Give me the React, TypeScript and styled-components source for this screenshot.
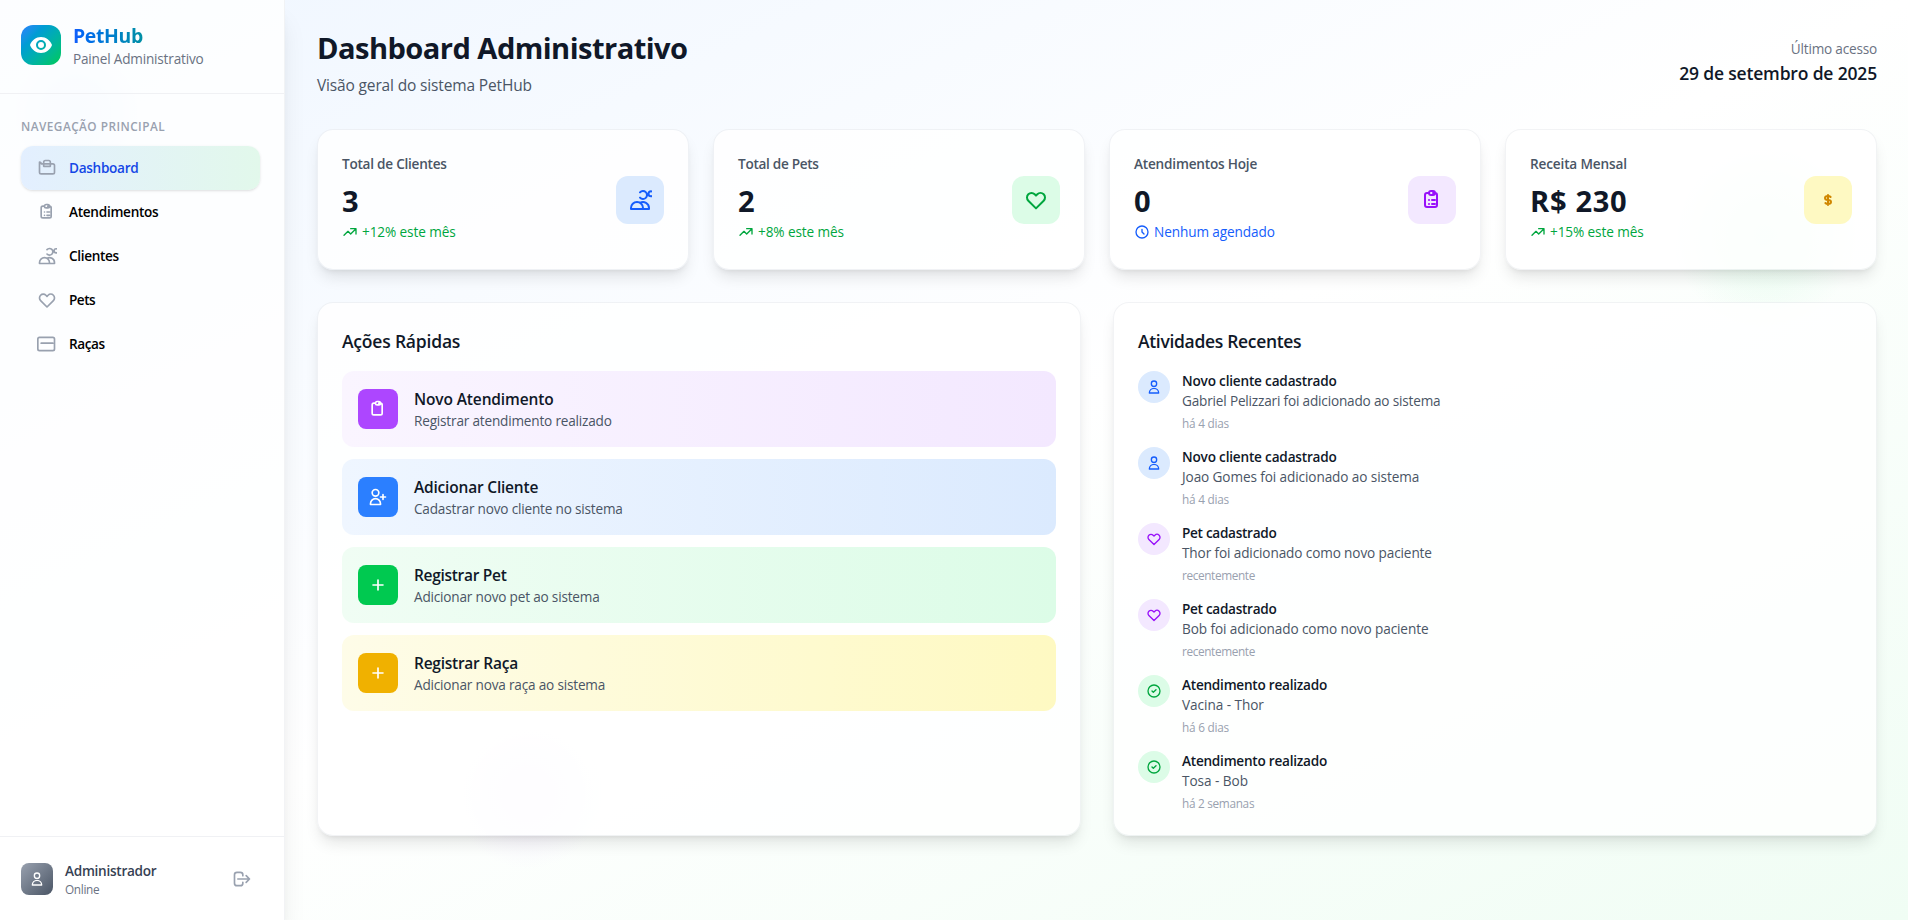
import React from 'react';
import styled, { createGlobalStyle } from 'styled-components';

const Global = createGlobalStyle`
  *, *::before, *::after { box-sizing: border-box; }
  body { margin: 0; overflow: hidden; font-family: "Open Sans", "Noto Sans", sans-serif; color: #101828; }
  p, h1, h2, h3 { margin: 0; }
`;

const paths = {
  dashboard: 'M3 7v10a2 2 0 002 2h14a2 2 0 002-2V9a2 2 0 00-2-2H5a2 2 0 00-2-2zM8 5a2 2 0 012-2h4a2 2 0 012 2v5H8V5z',
  list: 'M9 5H7a2 2 0 00-2 2v10a2 2 0 002 2h8a2 2 0 002-2V7a2 2 0 00-2-2h-2M9 5a2 2 0 002 2h2a2 2 0 002-2M9 5a2 2 0 012-2h2a2 2 0 012 2m-3 7h3m-3 4h3m-6-4h.01M9 16h.01',
  clipboard: 'M9 5H7a2 2 0 00-2 2v10a2 2 0 002 2h8a2 2 0 002-2V7a2 2 0 00-2-2h-2M9 5a2 2 0 002 2h2a2 2 0 002-2M9 5a2 2 0 012-2h2a2 2 0 012 2',
  clients: 'M12 4.354a4 4 0 110 5.292M15 21H3v-1a6 6 0 0112 0v1zm0 0h6v-1a6 6 0 00-9-5.197m13.5-9a2.5 2.5 0 11-5 0 2.5 2.5 0 015 0z',
  heart: 'M4.318 6.318a4.5 4.5 0 000 6.364L12 20.364l7.682-7.682a4.5 4.5 0 00-6.364-6.364L12 7.636l-1.318-1.318a4.5 4.5 0 00-6.364 0z',
  breeds: 'M19 11H5M3 4h16a2 2 0 012 2v12a2 2 0 01-2 2H3a2 2 0 01-2-2V6a2 2 0 012-2z',
  dollar: 'M12 8c-1.657 0-3 .895-3 2s1.343 2 3 2 3 .895 3 2-1.343 2-3 2m0-8c1.11 0 2.08.402 2.599 1M12 8V7m0 1v8m0 0v1m0-1c-1.11 0-2.08-.402-2.599-1',
  trend: 'M13 7h8m0 0v8m0-8l-8 8-4-4-6 6',
  clock: 'M12 8v4l3 3m6-3a9 9 0 11-18 0 9 9 0 0118 0z',
  user: 'M16 7a4 4 0 11-8 0 4 4 0 018 0zM12 14a7 7 0 00-7 7h14a7 7 0 00-7-7z',
  userPlus: 'M18 9v3m0 0v3m0-3h3m-3 0h-3m-2-5a4 4 0 11-8 0 4 4 0 018 0zM3 20a6 6 0 0112 0v1H3v-1z',
  plus: 'M12 6v6m0 0v6m0-6h6m-6 0H6',
  check: 'M9 12l2 2 4-4m6 2a9 9 0 11-18 0 9 9 0 0118 0z',
  logout: 'M17 16l4-4m0 0l-4-4m4 4H7m6 4v1a3 3 0 01-3 3H6a3 3 0 01-3-3V7a3 3 0 013-3h4a3 3 0 013 3v1',
};
type IconName = keyof typeof paths;

const Svg = styled.svg`display: block; flex: none;`;
function Icon({ name, size }: { name: IconName; size: number }) {
  return (
    <Svg width={size} height={size} viewBox="0 0 24 24" fill="none" stroke="currentColor" strokeWidth="2" strokeLinecap="round" strokeLinejoin="round">
      <path d={paths[name]} />
    </Svg>
  );
}

const Page = styled.div`
  display: flex;
  height: 920px;
  background:
    radial-gradient(circle 92px at 1765px 236px, rgba(123, 241, 168, .13) 0%, rgba(123, 241, 168, .08) 55%, rgba(123, 241, 168, 0) 100%),
    radial-gradient(circle 75px at 528px 794px, rgba(218, 178, 255, .15) 0%, rgba(218, 178, 255, .1) 50%, rgba(218, 178, 255, 0) 100%),
    radial-gradient(circle 62px at 76px 112px, rgba(142, 197, 255, .17) 0%, rgba(142, 197, 255, .12) 50%, rgba(142, 197, 255, 0) 100%),
    linear-gradient(to bottom right, #eff6ff, #fff 50%, #f0fdf4);
`;

const Sidebar = styled.aside`
  width: 285px;
  flex: none;
  display: flex;
  flex-direction: column;
  background: rgba(255, 255, 255, .8);
  border-right: 1px solid rgba(229, 231, 235, .5);
  box-shadow: 0 20px 25px -5px rgba(0, 0, 0, .1), 0 8px 10px -6px rgba(0, 0, 0, .1);
`;
const Brand = styled.header`
  display: flex;
  align-items: center;
  gap: 12px;
  padding: 21px 24px 24px 21px;
  border-bottom: 1px solid #f0f1f4;
`;
const Logo = styled.div`
  width: 40px;
  height: 40px;
  display: grid;
  place-items: center;
  border-radius: 12px;
  background: linear-gradient(to bottom right in oklab, #2b7fff, #00c950);
`;
const BrandName = styled.h1`
  font-size: 19.4px;
  line-height: 28px;
  font-weight: 700;
  letter-spacing: -.32px;
  padding-top: 1px;
  margin-bottom: -1px;
  background: linear-gradient(to right in oklab, #155dfc, #00a63e);
  -webkit-background-clip: text;
  background-clip: text;
  color: transparent;
`;
const Body = styled.p<{ $ls?: number; $color?: string }>`
  font-size: 13.6px;
  line-height: 20px;
  letter-spacing: ${p => p.$ls ?? -0.19}px;
  color: ${p => p.$color ?? '#4a5565'};
`;
const Strong = styled(Body)`font-weight: 550;`;
const Caption = styled.p<{ $ls?: number; $color?: string }>`
  font-size: 11.8px;
  line-height: 16px;
  letter-spacing: ${p => p.$ls ?? -0.2}px;
  color: ${p => p.$color ?? '#99a1af'};
`;
const Nav = styled.nav`
  flex: 1;
  padding: 24px 24px 0 21px;
`;
const NavTitle = styled.h3`
  font-size: 11.8px;
  line-height: 16px;
  font-weight: 650;
  letter-spacing: .47px;
  color: #99a1af;
  margin-bottom: 12px;
`;
const NavItem = styled.a<{ $active?: boolean }>`
  display: flex;
  align-items: center;
  gap: 12px;
  height: 44px;
  padding: 0 16px;
  border-radius: 12px;
  color: #99a1af;
  ${p => p.$active && `
    background: linear-gradient(to right in oklab, #e3efff, #e2f8eb);
    box-shadow: 0 1px 3px rgba(0, 0, 0, .1), 0 1px 2px -1px rgba(0, 0, 0, .1);
  `}
`;
const UserBar = styled.footer`
  display: flex;
  align-items: center;
  gap: 12px;
  height: 84px;
  padding: 0 32px 0 21px;
  border-top: 1px solid #f0f1f4;
`;
const Avatar = styled.div`
  width: 32px;
  height: 32px;
  display: grid;
  place-items: center;
  border-radius: 8px;
  color: #fff;
  background: linear-gradient(to bottom right, #99a1af, #4a5565);
`;
const UserText = styled.div`flex: 1;`;
const Logout = styled.div`color: #99a1af;`;

const Main = styled.main`
  flex: 1;
  min-width: 0;
  padding: 29px 31px 0 32px;
  display: flex;
  flex-direction: column;
  gap: 32px;
`;
const PageHead = styled.header`
  display: flex;
  justify-content: space-between;
  align-items: center;
  height: 68px;
`;
const Title = styled.h1`
  font-size: 29.1px;
  line-height: 36px;
  font-weight: 700;
  letter-spacing: -.55px;
  padding-top: 1px;
  margin-bottom: 7px;
`;
const Subtitle = styled.p`
  font-size: 15.5px;
  line-height: 24px;
  letter-spacing: -.15px;
  color: #4a5565;
`;
const Access = styled.div`text-align: right;`;
const Heading = styled.h2<{ $ls: number }>`
  font-size: 17.5px;
  line-height: 28px;
  font-weight: 550;
  letter-spacing: ${p => p.$ls}px;
`;

const Stats = styled.section`
  display: grid;
  grid-template-columns: repeat(4, 1fr);
  gap: 24px;
`;
const Card = styled.div`
  background: rgba(255, 255, 255, .8);
  border: 1px solid rgba(229, 231, 235, .5);
  border-radius: 16px;
  background-clip: padding-box;
  box-shadow: 0 10px 15px -3px rgba(0, 0, 0, .1), 0 4px 6px -4px rgba(0, 0, 0, .1);
  padding: 24px;
`;
const StatCard = styled(Card)`
  height: 141px;
  display: flex;
  justify-content: space-between;
  align-items: center;
`;
const StatText = styled.div`height: 91px;`;
const Value = styled.p<{ $ls?: number }>`
  margin: 9px 0 3px;
  font-size: 29.1px;
  line-height: 36px;
  font-weight: 700;
  letter-spacing: ${p => p.$ls ?? 0}px;
`;
const Trend = styled.div<{ $color: string }>`
  display: flex;
  align-items: center;
  gap: 4px;
  color: ${p => p.$color};
`;
const IconTile = styled.div<{ $bg: string; $color: string }>`
  width: 48px;
  height: 48px;
  display: grid;
  place-items: center;
  border-radius: 12px;
  background: ${p => p.$bg};
  color: ${p => p.$color};
`;

const Panels = styled.section`
  display: grid;
  grid-template-columns: 1fr 1fr;
  gap: 32px;
`;
const PanelCard = styled(Card)`height: 534px;`;
const Actions = styled.div`
  margin-top: 16px;
  display: flex;
  flex-direction: column;
  gap: 12px;
`;
const Action = styled.div<{ $from: string; $to: string }>`
  display: flex;
  align-items: center;
  gap: 16px;
  height: 76px;
  padding: 16px;
  border-radius: 12px;
  background: linear-gradient(to right, ${p => p.$from}, ${p => p.$to});
`;
const ActionIcon = styled.div<{ $bg: string }>`
  width: 40px;
  height: 40px;
  display: grid;
  place-items: center;
  border-radius: 8px;
  color: #fff;
  background: ${p => p.$bg};
`;
const ActionTitle = styled.h3<{ $ls: number }>`
  font-size: 15.5px;
  line-height: 24px;
  font-weight: 550;
  letter-spacing: ${p => p.$ls}px;
`;
const Feed = styled(Actions)`gap: 16px;`;
const FeedItem = styled.div`
  display: flex;
  align-items: flex-start;
  gap: 12px;
  height: 60px;
`;
const Dot = styled(IconTile)`
  width: 32px;
  height: 32px;
  border-radius: 50%;
`;
const Time = styled(Caption)`margin-top: 4px;`;

const nav: { icon: IconName; label: string; ls: number; active?: boolean }[] = [
  { icon: 'dashboard', label: 'Dashboard', ls: -0.3, active: true },
  { icon: 'list', label: 'Atendimentos', ls: -0.28 },
  { icon: 'clients', label: 'Clientes', ls: -0.33 },
  { icon: 'heart', label: 'Pets', ls: -0.5 },
  { icon: 'breeds', label: 'Raças', ls: -0.4 },
];
const stats: { label: string; ls: number; value: string; vls?: number; trend: string; ti: IconName; tc: string; icon: IconName; bg: string; color: string }[] = [
  { label: 'Total de Clientes', ls: -0.25, value: '3', trend: '+12% este mês', ti: 'trend', tc: '#00a63e', icon: 'clients', bg: '#dbeafe', color: '#155dfc' },
  { label: 'Total de Pets', ls: -0.3, value: '2', trend: '+8% este mês', ti: 'trend', tc: '#00a63e', icon: 'heart', bg: '#dcfce7', color: '#00a63e' },
  { label: 'Atendimentos Hoje', ls: -0.2, value: '0', trend: 'Nenhum agendado', ti: 'clock', tc: '#155dfc', icon: 'list', bg: '#f3e8ff', color: '#9810fa' },
  { label: 'Receita Mensal', ls: -0.15, value: 'R$ 230', vls: 0.68, trend: '+15% este mês', ti: 'trend', tc: '#00a63e', icon: 'dollar', bg: '#fef9c2', color: '#d08700' },
];
const actions: { icon: IconName; title: string; ls: number; text: string; bg: string; from: string; to: string }[] = [
  { icon: 'clipboard', title: 'Novo Atendimento', ls: -0.13, text: 'Registrar atendimento realizado', bg: '#ad46ff', from: '#faf5ff', to: '#f3e8ff' },
  { icon: 'userPlus', title: 'Adicionar Cliente', ls: -0.2, text: 'Cadastrar novo cliente no sistema', bg: '#2b7fff', from: '#eff6ff', to: '#dbeafe' },
  { icon: 'plus', title: 'Registrar Pet', ls: -0.3, text: 'Adicionar novo pet ao sistema', bg: '#00c950', from: '#f0fdf4', to: '#dcfce7' },
  { icon: 'plus', title: 'Registrar Raça', ls: -0.25, text: 'Adicionar nova raça ao sistema', bg: '#f0b100', from: '#fefce8', to: '#fef9c2' },
];
const kinds = {
  client: { icon: 'user' as IconName, bg: '#dbeafe', color: '#155dfc', title: 'Novo cliente cadastrado', ls: -0.19 },
  pet: { icon: 'heart' as IconName, bg: '#f3e8ff', color: '#9810fa', title: 'Pet cadastrado', ls: -0.3 },
  visit: { icon: 'check' as IconName, bg: '#dcfce7', color: '#00a63e', title: 'Atendimento realizado', ls: -0.24 },
};
const feed: { kind: keyof typeof kinds; text: string; ls?: number; time: string; tls: number }[] = [
  { kind: 'client', text: 'Gabriel Pelizzari foi adicionado ao sistema', ls: -0.18, time: 'há 4 dias', tls: -0.24 },
  { kind: 'client', text: 'Joao Gomes foi adicionado ao sistema', ls: -0.1, time: 'há 4 dias', tls: -0.24 },
  { kind: 'pet', text: 'Thor foi adicionado como novo paciente', ls: -0.12, time: 'recentemente', tls: -0.37 },
  { kind: 'pet', text: 'Bob foi adicionado como novo paciente', ls: -0.1, time: 'recentemente', tls: -0.37 },
  { kind: 'visit', text: 'Vacina - Thor', ls: -0.05, time: 'há 6 dias', tls: -0.24 },
  { kind: 'visit', text: 'Tosa - Bob', ls: -0.05, time: 'há 2 semanas', tls: -0.3 },
];

export default function App() {
  return (
    <Page>
      <Global />
      <Sidebar>
        <Brand>
          <Logo>
            <Svg width="24" height="24" viewBox="0 0 24 24" fill="#fff">
              <path d="M12 4C7 4 2.73 7.3 1 12c1.73 4.7 6 8 11 8s9.27-3.3 11-8c-1.73-4.7-6-8-11-8zm0 13a5 5 0 110-10 5 5 0 010 10zm0-8a3 3 0 100 6 3 3 0 000-6z" />
            </Svg>
          </Logo>
          <div>
            <BrandName>PetHub</BrandName>
            <Body $color="#6a7282">Painel Administrativo</Body>
          </div>
        </Brand>
        <Nav>
          <NavTitle>NAVEGAÇÃO PRINCIPAL</NavTitle>
          {nav.map(n => (
            <NavItem key={n.label} $active={n.active}>
              <Icon name={n.icon} size={20} />
              <Strong $ls={n.ls} $color={n.active ? '#1447e6' : '#000'}>{n.label}</Strong>
            </NavItem>
          ))}
        </Nav>
        <UserBar>
          <Avatar><Icon name="user" size={16} /></Avatar>
          <UserText>
            <Strong $ls={-0.28} $color="#364153">Administrador</Strong>
            <Caption $ls={-0.32} $color="#6a7282">Online</Caption>
          </UserText>
          <Logout><Icon name="logout" size={20} /></Logout>
        </UserBar>
      </Sidebar>
      <Main>
        <PageHead>
          <div>
            <Title>Dashboard Administrativo</Title>
            <Subtitle>Visão geral do sistema PetHub</Subtitle>
          </div>
          <Access>
            <Body $ls={-0.2} $color="#6a7282">Último acesso</Body>
            <Heading as="p" $ls={-0.17}>29 de setembro de 2025</Heading>
          </Access>
        </PageHead>
        <Stats>
          {stats.map(s => (
            <StatCard key={s.label}>
              <StatText>
                <Strong $ls={s.ls}>{s.label}</Strong>
                <Value $ls={s.vls}>{s.value}</Value>
                <Trend $color={s.tc}>
                  <Icon name={s.ti} size={16} />
                  <Body $ls={-0.1} $color="inherit">{s.trend}</Body>
                </Trend>
              </StatText>
              <IconTile $bg={s.bg} $color={s.color}><Icon name={s.icon} size={24} /></IconTile>
            </StatCard>
          ))}
        </Stats>
        <Panels>
          <PanelCard>
            <Heading $ls={-0.2}>Ações Rápidas</Heading>
            <Actions>
              {actions.map(a => (
                <Action key={a.title} $from={a.from} $to={a.to}>
                  <ActionIcon $bg={a.bg}><Icon name={a.icon} size={20} /></ActionIcon>
                  <div>
                    <ActionTitle $ls={a.ls}>{a.title}</ActionTitle>
                    <Body>{a.text}</Body>
                  </div>
                </Action>
              ))}
            </Actions>
          </PanelCard>
          <PanelCard>
            <Heading $ls={-0.32}>Atividades Recentes</Heading>
            <Feed>
              {feed.map((f, i) => {
                const k = kinds[f.kind];
                return (
                  <FeedItem key={i}>
                    <Dot $bg={k.bg} $color={k.color}><Icon name={k.icon} size={16} /></Dot>
                    <div>
                      <Strong $ls={k.ls} $color="#101828">{k.title}</Strong>
                      <Body $ls={f.ls}>{f.text}</Body>
                      <Time $ls={f.tls}>{f.time}</Time>
                    </div>
                  </FeedItem>
                );
              })}
            </Feed>
          </PanelCard>
        </Panels>
      </Main>
    </Page>
  );
}
